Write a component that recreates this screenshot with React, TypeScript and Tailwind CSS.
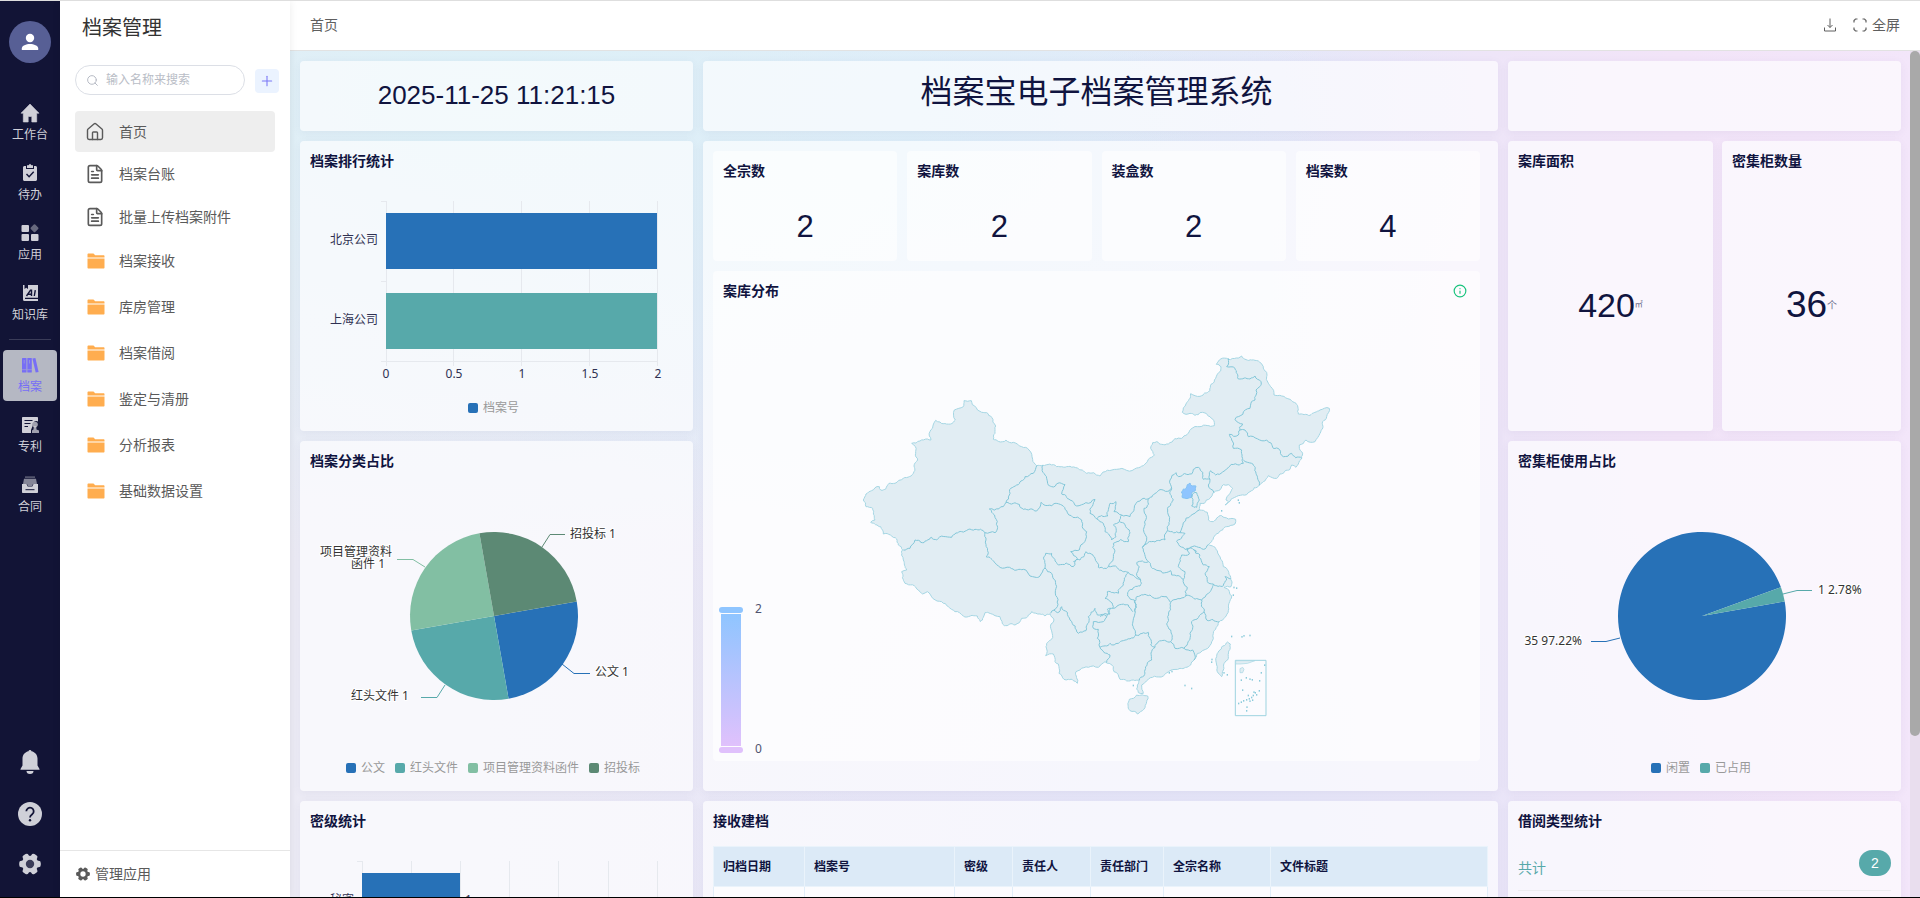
import React from "react";
import { FileText, House, Info, Plus, Search } from "lucide-react";

type Pt = [number, number];

const BLUE = "#2771b7";
const TEAL = "#57a9aa";
const MINT = "#82bfa3";
const MOSS = "#5c8974";

/* ---------- rail icons ---------- */

const HomeSolid = () => (
  <svg viewBox="0 0 20 20" className="size-5" fill="currentColor">
    <path d="M10 1 1 10.200h2.300V19h4.900v-5.500h3.600V19h4.900v-8.800H19z" stroke="currentColor" strokeWidth=".6" strokeLinejoin="round" />
  </svg>
);
const ClipboardSolid = () => (
  <svg viewBox="0 0 20 20" className="size-5" fill="currentColor">
    <path d="M3 4.500C3 3.700 3.700 3 4.500 3H6v3h8V3h1.500c.8 0 1.500.7 1.500 1.500v12c0 .8-.7 1.500-1.500 1.500h-11C3.700 18 3 17.300 3 16.500z" />
    <path d="M7 2.200h1.500L10 .8l1.500 1.400H13V5H7z" />
    <path d="m6.500 11 2.600 2.700 4.600-5" fill="none" stroke="#121436" strokeWidth="1.400" />
  </svg>
);
const AppsSolid = () => (
  <svg viewBox="0 0 20 20" className="size-5" fill="currentColor">
    <rect x="1.500" y="2" width="7.500" height="7" rx="1" />
    <rect x="1.500" y="11" width="7.500" height="7" rx="1" />
    <rect x="11" y="11" width="7.500" height="7" rx="1" />
    <rect x="11.400" y="2.200" width="6.200" height="6.200" rx="1" transform="rotate(45 14.500 5.300)" opacity=".45" />
  </svg>
);
const KnowledgeSolid = () => (
  <svg viewBox="0 0 20 20" className="size-5" fill="currentColor">
    <path d="M3 2h1.500v4l1.700-1.300L8 6V2h10v12.800H5v1.200h13v2H4.500A1.500 1.500 0 0 1 3 16.500z" />
    <path d="m6.500 13 4-5.800h1V13M8 11.200h3M15.300 7.200 14.300 13" fill="none" stroke="#121436" strokeWidth="1.400" />
  </svg>
);
const ArchiveBooks = () => (
  <svg viewBox="0 0 20 20" className="size-5" fill="currentColor">
    <rect x="2" y="3" width="4.500" height="14.500" rx=".5" />
    <rect x="7.300" y="3" width="4.500" height="14.500" rx=".5" />
    <path d="m12.400 3.600 3-.7 3.200 14-2.900.7z" />
    <path d="M4.200 5v3.500M9.500 5v3.500M2 14.700h4.500M7.300 14.700h4.500" stroke="#b4b7c6" strokeWidth=".5" />
  </svg>
);
const PatentSolid = () => (
  <svg viewBox="0 0 20 20" className="size-5" fill="currentColor">
    <path d="M2 3c0-.6.4-1 1-1h14c.6 0 1 .4 1 1v3.500a4 4 0 0 0-5.500 4.700L11 15v3H3c-.6 0-1-.4-1-1z" />
    <path d="M4.500 5.500h8M4.500 8.500h6M4.500 11.500h3.500" stroke="#121436" strokeWidth="1.200" />
    <circle cx="15" cy="9.600" r="2.800" opacity=".75" />
    <path d="M13.800 11h2.400l.3 3.500 2.500 1V18h-7v-2.500l1.500-1z" opacity=".75" />
  </svg>
);
const ContractSolid = () => (
  <svg viewBox="0 0 20 20" className="size-5" fill="currentColor">
    <path d="M5 1.500h10v1.200H5z" opacity=".5" />
    <path d="M4 3.700h12l1 5.300h-4l-1 2H8L7 9H3z" opacity=".6" />
    <path d="M2 9h4.500l1.200 2.500h4.600L13.500 9H18v8c0 .6-.4 1-1 1H3c-.6 0-1-.4-1-1z" />
    <path d="M5.500 14.700h9" stroke="#121436" strokeWidth="1" />
  </svg>
);
const BellSolid = () => (
  <svg viewBox="0 0 24 26" className="h-[26px] w-6" fill="currentColor">
    <path d="M12 1c.8 0 1.400.6 1.500 1.300C17 3 19.500 6 19.500 9.500v7L21.500 20v.8h-19V20l2-3.500v-7C4.500 6 7 3 10.500 2.300 10.600 1.600 11.200 1 12 1zM8.500 22h7a3.500 3 0 0 1-7 0z" />
  </svg>
);
const HelpSolid = () => (
  <svg viewBox="0 0 24 24" className="size-6">
    <circle cx="12" cy="12" r="12" fill="currentColor" />
    <path d="M8.300 9.300a3.700 3.700 0 1 1 5.900 3c-1.400 1-2.200 1.600-2.200 3.200" fill="none" stroke="#121436" strokeWidth="1.800" />
    <circle cx="12" cy="18.300" r="1.200" fill="#121436" />
  </svg>
);
const GearSolid = ({ className, hole }: { className: string; hole: string }) => (
  <svg viewBox="0 0 20 20" className={className} fill="currentColor">
    <circle cx="10" cy="10" r="7.600" />
    {[0, 60, 120, 180, 240, 300].map((a) => (
      <rect key={a} x="15" y="7" width="4.800" height="6" rx="2" transform={`rotate(${a} 10 10)`} />
    ))}
    <circle cx="10" cy="10" r="3.800" fill={hole} />
  </svg>
);
const FolderIcon = () => (
  <svg viewBox="0 0 18 16" className="h-4 w-[18px] shrink-0" fill="#ffad4f">
    <path d="M.5 1.500C.5.900.9.500 1.500.5h5l1.700 1.700h8.300c.6 0 1 .4 1 1v1.300H.5z" />
    <path d="M.5 5.500h17v9c0 .6-.4 1-1 1h-15c-.6 0-1-.4-1-1z" />
  </svg>
);

/* ---------- navigation ---------- */

const railTop = [
  { label: "工作台", icon: <HomeSolid /> },
  { label: "待办", icon: <ClipboardSolid /> },
  { label: "应用", icon: <AppsSolid /> },
  { label: "知识库", icon: <KnowledgeSolid /> },
];
const railBottom = [
  { label: "档案", icon: <ArchiveBooks />, active: true },
  { label: "专利", icon: <PatentSolid /> },
  { label: "合同", icon: <ContractSolid /> },
];

function RailItem({ label, icon, active }: { label: string; icon: React.ReactNode; active?: boolean }) {
  return (
    <a
      href="#"
      className={
        "flex h-[51px] w-[54px] flex-col items-center gap-1 rounded pt-[5px] text-xs leading-4 " +
        (active ? "bg-[#b5b8c3] text-[#776ef5]" : "text-[#d0d0d8]")
      }
    >
      {icon}
      <span>{label}</span>
    </a>
  );
}

function Rail() {
  return (
    <nav className="flex w-[60px] shrink-0 flex-col items-center bg-[#121436] pt-5 pb-[22px]">
      <button aria-label="用户" className="flex size-[42px] items-center justify-center rounded-full bg-[#575f95]">
        <svg viewBox="0 0 18 18" className="size-[18px]" fill="#fff">
          <circle cx="9" cy="5" r="4.200" />
          <path d="M.8 17v-1.500c0-3 4.400-4.500 8.200-4.500s8.200 1.500 8.200 4.500V17z" />
        </svg>
      </button>
      <div className="mt-[35px] flex flex-col items-center gap-[9px]">
        {railTop.map((i) => (
          <RailItem key={i.label} {...i} />
        ))}
        <div className="my-px h-px w-[42px] bg-[#3a3c58]" />
        {railBottom.map((i) => (
          <RailItem key={i.label} {...i} />
        ))}
      </div>
      <div className="mt-auto flex flex-col items-center gap-[27px] text-[#cfd0d8]">
        <button aria-label="通知"><BellSolid /></button>
        <button aria-label="帮助"><HelpSolid /></button>
        <button aria-label="设置"><GearSolid className="size-[22px]" hole="#3a3c58" /></button>
      </div>
    </nav>
  );
}

const folders = ["档案接收", "库房管理", "档案借阅", "鉴定与清册", "分析报表", "基础数据设置"];

function SidePanel() {
  return (
    <aside className="z-10 flex w-[230px] shrink-0 flex-col bg-white text-[#5a5a5a] shadow-[0_0_8px_rgba(0,0,0,0.08)]">
      <h1 className="mt-[11px] ml-[22px] text-xl leading-8 text-[#333]">档案管理</h1>
      <div className="mt-[21px] ml-[15px] flex items-center gap-[10px]">
        <label className="flex h-[30px] w-[170px] items-center gap-[7px] rounded-full border border-[#dcdfe6] pl-[10px]">
          <Search className="size-[13px] shrink-0 text-[#b4b8c2]" strokeWidth={1.8} />
          <input
            aria-label="搜索"
            placeholder="输入名称来搜索"
            className="w-full min-w-0 bg-transparent text-xs outline-none placeholder:text-[#b9bdc6]"
          />
        </label>
        <button aria-label="新增" className="mt-[2px] flex size-6 items-center justify-center rounded bg-[#ebf3ff] text-[#7b78f6]">
          <Plus className="size-4" strokeWidth={1.6} />
        </button>
      </div>
      <ul className="mx-[15px] mt-4 text-sm">
        <li>
          <a href="#" className="flex h-[41px] items-center gap-[14px] rounded bg-[#eee] pl-[10px]">
            <House className="size-5" strokeWidth={1.7} />
            <span>首页</span>
          </a>
        </li>
        {["档案台账", "批量上传档案附件"].map((t) => (
          <li key={t}>
            <a href="#" className="flex h-[43px] items-center gap-[14px] pl-[10px]">
              <FileText className="size-5" strokeWidth={2} />
              <span>{t}</span>
            </a>
          </li>
        ))}
        {folders.map((t) => (
          <li key={t}>
            <a href="#" className="flex h-[46px] items-center gap-[14px] pl-3">
              <FolderIcon />
              <span>{t}</span>
            </a>
          </li>
        ))}
      </ul>
      <button className="mt-auto flex h-[47px] items-center gap-[5px] border-t border-[#e6e6e6] pl-4 text-sm">
        <GearSolid className="size-[14px]" hole="#fff" />
        管理应用
      </button>
    </aside>
  );
}

/* ---------- cards ---------- */

function Card({ title, className = "", children }: { title?: string; className?: string; children?: React.ReactNode }) {
  return (
    <section className={"flex min-w-0 flex-col rounded bg-white/65 shadow-[0_2px_10px_rgba(60,60,120,0.06)] " + className}>
      {title && <h2 className="px-[10px] pt-[10px] text-sm leading-5 font-bold">{title}</h2>}
      {children}
    </section>
  );
}

function Stat({ title, value }: { title: string; value: number }) {
  return (
    <div className="flex h-[110px] flex-col rounded bg-white/60 px-[10px] pt-[10px]">
      <h2 className="text-sm leading-5 font-bold">{title}</h2>
      <div className="mt-7 text-center text-[31px] leading-9">{value}</div>
    </div>
  );
}

/* ---------- charts ---------- */

const label = "font-['Noto_Sans','Noto_Sans_CJK_SC',sans-serif] text-xs";

function Legend({ items }: { items: { x: number; y: number; text: string; color: string }[] }) {
  return (
    <g className={label}>
      {items.map((i) => (
        <g key={i.text}>
          <rect x={i.x} y={i.y - 5} width="10" height="10" rx="2" fill={i.color} />
          <text x={i.x + 15} y={i.y - 1} dominantBaseline="central" fill="#999">{i.text}</text>
        </g>
      ))}
    </g>
  );
}

function RankChart() {
  return (
    <svg viewBox="0 30 393 260" className="w-full">
      <g stroke="#e6e9ee">
        {[86.5, 153.5, 221.5, 289.5, 357.5].map((x) => (
          <line key={x} x1={x} x2={x} y1="60" y2="225" />
        ))}
        {[60.5, 140.5, 220.5].map((y) => (
          <line key={y} x1="81" x2="86" y1={y} y2={y} />
        ))}
        <line x1="86" x2="357" y1="220.5" y2="220.5" />
      </g>
      <rect x="86" y="72" width="271" height="56" fill={BLUE} />
      <rect x="86" y="152" width="271" height="56" fill={TEAL} />
      <g className={label} fill="#2f3152" dominantBaseline="central">
        <text x="78" y="98" textAnchor="end">北京公司</text>
        <text x="78" y="178" textAnchor="end">上海公司</text>
        {["0", "0.5", "1", "1.5", "2"].map((t, i) => (
          <text key={t} x={86 + i * 68} y="232" textAnchor="middle">{t}</text>
        ))}
      </g>
      <Legend items={[{ x: 168, y: 267, text: "档案号", color: BLUE }]} />
    </svg>
  );
}

function slice(cx: number, cy: number, r: number, from: number, to: number) {
  const p = (a: number) => `${cx + r * Math.cos((a * Math.PI) / 180)} ${cy + r * Math.sin((a * Math.PI) / 180)}`;
  return `M${cx} ${cy}L${p(from)}A${r} ${r} 0 ${to - from > 180 ? 1 : 0} 1 ${p(to)}Z`;
}

const halo = { stroke: "#fff", strokeWidth: 2, paintOrder: "stroke", fill: "#333" } as const;

function CategoryPie() {
  return (
    <svg viewBox="0 30 393 320" className="w-full">
      {[BLUE, TEAL, MINT, MOSS].map((c, i) => (
        <path key={c} d={slice(194, 175, 84, -10 + i * 90, 80 + i * 90)} fill={c} />
      ))}
      <g fill="none">
        <path d="M242 106 250 93.500H265" stroke={MOSS} />
        <path d="M262 223 274 232.500H290" stroke={BLUE} />
        <path d="M145 244 137 256.500H121" stroke={TEAL} />
        <path d="M125 126 113 118.500H97" stroke={MINT} />
      </g>
      <g className={label} dominantBaseline="central" {...halo}>
        <text x="270" y="92">招投标 1</text>
        <text x="295" y="230">公文 1</text>
        <text x="109" y="254" textAnchor="end">红头文件 1</text>
        <text textAnchor="end">
          <tspan x="92" y="110">项目管理资料</tspan>
          <tspan x="85" y="122">函件 1</tspan>
        </text>
      </g>
      <Legend
        items={[
          { x: 46, y: 327, text: "公文", color: BLUE },
          { x: 95, y: 327, text: "红头文件", color: TEAL },
          { x: 168, y: 327, text: "项目管理资料函件", color: MINT },
          { x: 289, y: 327, text: "招投标", color: MOSS },
        ]}
      />
    </svg>
  );
}

function UsagePie() {
  return (
    <svg viewBox="0 30 393 320" className="w-full">
      <path d={slice(194, 175, 84, -10, 340)} fill={BLUE} />
      <path d={slice(194, 175, 84, -20, -10)} fill={TEAL} />
      <g fill="none">
        <path d="M275 153 289 149.500H304" stroke={TEAL} />
        <path d="M112 197 98 200.500H83" stroke={BLUE} />
      </g>
      <g className={label} dominantBaseline="central" {...halo}>
        <text x="310" y="148">1 2.78%</text>
        <text x="74" y="199" textAnchor="end">35 97.22%</text>
      </g>
      <Legend
        items={[
          { x: 143, y: 327, text: "闲置", color: BLUE },
          { x: 192, y: 327, text: "已占用", color: TEAL },
        ]}
      />
    </svg>
  );
}

function SecrecyChart() {
  return (
    <svg viewBox="0 30 393 260" className="w-full">
      <g stroke="#e6e9ee">
        {[62.5, 111.5, 160.5, 209.5, 258.5, 308.5, 357.5].map((x) => (
          <line key={x} x1={x} x2={x} y1="60" y2="225" />
        ))}
        <line x1="57" x2="62" y1="60.5" y2="60.5" />
      </g>
      <rect x="62" y="72" width="98" height="56" fill={BLUE} />
      <g className={label} dominantBaseline="central" fill="#2f3152">
        <text x="54" y="98" textAnchor="end">秘密</text>
        <text x="165" y="98">1</text>
      </g>
    </svg>
  );
}

/* ---------- map ---------- */

/** Breaks each segment into small seeded wiggles so that borders read as natural coastlines. */
function wiggle(points: Pt[], amount = 0.16): string {
  const out: Pt[] = [points[0]];
  const split = (a: Pt, b: Pt, depth: number) => {
    const dx = b[0] - a[0];
    const dy = b[1] - a[1];
    const len = Math.hypot(dx, dy);
    if (depth === 0 || len < 8) {
      out.push(b);
      return;
    }
    const s = Math.sin((a[0] + b[0]) * 12.9898 + (a[1] + b[1]) * 78.233) * 43758.5453;
    const k = (s - Math.floor(s) - 0.5) * 2 * amount;
    const m: Pt = [(a[0] + b[0]) / 2 - dy * k, (a[1] + b[1]) / 2 + dx * k];
    split(a, m, depth - 1);
    split(m, b, depth - 1);
  };
  for (let i = 1; i < points.length; i++) split(points[i - 1], points[i], 3);
  return "M" + out.map((p) => `${p[0].toFixed(1)} ${p[1].toFixed(1)}`).join("L");
}

const east = (pts: Pt[]): Pt[] => pts.map(([x, y]) => [x + 780, y]);

const outline: Pt[] = [
  [70, 480], [78, 462], [95, 452], [118, 440], [122, 450], [138, 446], [147, 430], [165, 430], [190, 415], [222, 395],
  [222, 378], [233, 360], [227, 340], [226, 320], [215, 310], [240, 303], [262, 297], [273, 300], [268, 288], [287, 241],
  [300, 246], [340, 247], [346, 240], [343, 210], [370, 200], [372, 182], [394, 182], [397, 194], [420, 214], [440, 218],
  [455, 232], [467, 258], [465, 280], [460, 298], [475, 304], [520, 307], [545, 320], [567, 330], [578, 358], [590, 377],
  [608, 376], [650, 380], [690, 379], [712, 384], [740, 400],
  ...east([
    [0, 408], [50, 388], [110, 384], [130, 377], [145, 358], [163, 345], [152, 325], [158, 308], [170, 305], [185, 313],
    [205, 312], [225, 296], [245, 295], [262, 283], [272, 268], [300, 260], [343, 257], [343, 248], [330, 230], [315, 219],
    [300, 218], [285, 226], [270, 220], [258, 223], [247, 217], [258, 192], [272, 161], [300, 169], [330, 152], [333, 133],
    [347, 115], [362, 93], [363, 80], [349, 73], [358, 60], [380, 55], [425, 48], [455, 60], [475, 63], [490, 80],
    [500, 110], [512, 140], [522, 165], [545, 168], [570, 178], [588, 190], [595, 222], [630, 226], [660, 210], [688, 205],
    [680, 230], [668, 245], [660, 280], [645, 305], [618, 300], [598, 315], [605, 335], [605, 355], [595, 372], [588, 382],
    [575, 375], [570, 388], [540, 402], [530, 415], [505, 407], [490, 425], [478, 436], [450, 455], [440, 464], [415, 467],
    [375, 495], [385, 485], [378, 480], [390, 460], [398, 445], [385, 434], [370, 434], [355, 452], [340, 458], [330, 475],
    [313, 490], [300, 490], [298, 510], [322, 517], [325, 540], [340, 545], [365, 527], [385, 537], [407, 538], [405, 552],
    [380, 560], [355, 580], [335, 605], [325, 614], [352, 632], [362, 658], [370, 680], [392, 712], [393, 740], [372, 742],
    [388, 755], [395, 768], [387, 790], [385, 812], [357, 846], [340, 880], [340, 895], [312, 930], [282, 960], [272, 975],
    [240, 985], [210, 992], [190, 1008], [140, 1022], [125, 1035], [130, 1060], [115, 1058], [112, 1035], [118, 1020],
    [100, 1020], [60, 1018], [42, 995], [40, 980],
  ]),
  [802, 970], [795, 965], [775, 982], [745, 982], [720, 990], [708, 995], [712, 1030], [700, 1022], [685, 1018], [672, 1018],
  [657, 1000], [655, 972], [645, 965], [640, 942], [617, 947], [618, 920], [638, 893], [642, 840], [630, 822], [615, 828],
  [600, 822], [575, 815], [545, 835], [525, 855], [493, 857], [480, 830], [465, 827], [435, 818], [421, 845], [412, 828],
  [370, 828], [345, 815], [325, 800], [305, 785], [262, 755], [248, 762], [235, 750], [195, 730], [185, 695], [200, 690],
  [190, 660], [188, 630], [175, 615], [170, 597], [130, 582], [122, 560], [92, 547], [105, 540], [98, 505], [78, 500], [70, 480],
];

const borders: Pt[][] = [
  [[590, 377], [580, 400], [555, 410], [530, 435], [512, 445], [508, 465], [498, 487]],
  [[498, 487], [448, 507], [458, 520], [472, 545], [465, 578], [435, 578]],
  [[190, 630], [210, 625], [225, 600], [260, 602], [275, 592], [290, 600], [335, 592], [365, 575], [405, 568], [435, 578]],
  [[435, 578], [438, 600], [438, 650], [465, 668], [515, 686], [550, 688], [570, 708], [600, 708], [615, 684]],
  [[498, 487], [520, 490], [550, 508], [590, 513], [603, 487], [645, 490], [680, 512], [725, 540], [740, 575], [718, 630], [692, 635], [712, 655], [700, 680], [655, 675], [635, 640], [617, 640], [615, 684]],
  [[615, 684], [635, 700], [648, 745], [652, 800], [642, 810], [632, 820]],
  [[700, 665], [720, 660], [738, 635], [765, 655], [775, 682], [805, 680]],
  [[608, 376], [620, 415], [635, 440], [675, 434], [665, 462], [690, 480], [710, 498], [765, 478], [750, 520], [770, 537]],
  [[770, 537], [803, 528], [810, 490], [828, 485], [822, 515], [845, 525], [838, 545], [820, 555], [828, 590], [815, 600], [795, 575], [790, 550], [770, 537]],
  [[838, 545], [868, 570], [865, 605], [820, 610], [820, 655], [805, 680]],
  [[845, 525], [870, 530], [900, 483], [928, 475]],
  [[642, 810], [652, 818], [665, 800], [690, 840], [715, 880], [738, 872], [745, 830], [765, 805], [772, 825], [800, 830]],
  [[780, 922], [772, 895], [775, 868], [758, 860], [760, 845], [790, 845], [800, 830], [812, 805]],
  [[780, 922], [810, 945], [800, 968]],
  ...(
    [
      [[148, 475], [132, 505], [133, 560], [127, 622]],
      [[148, 475], [175, 452], [215, 445]],
      [[215, 445], [220, 480], [203, 510], [208, 540], [202, 572]],
      [[127, 622], [165, 606], [195, 600], [202, 572]],
      [[215, 445], [210, 420], [228, 398], [235, 410], [275, 402], [280, 388], [295, 382], [310, 418], [330, 418], [325, 435], [342, 458]],
      [[202, 572], [240, 578], [250, 548], [298, 510]],
      [[240, 578], [255, 580], [230, 605], [265, 628]],
      [[265, 628], [290, 620], [310, 628], [325, 614]],
      [[330, 418], [332, 392], [347, 405], [385, 383], [430, 370]],
      [[430, 360], [455, 370], [468, 400], [478, 436]],
      [[430, 370], [425, 330], [400, 325], [395, 300], [388, 283], [415, 285], [420, 270], [435, 270]],
      [[435, 270], [445, 290], [500, 300], [520, 325], [538, 328], [550, 350], [575, 340], [605, 355]],
      [[420, 270], [418, 262], [428, 252], [405, 238], [450, 205], [465, 180], [468, 150], [483, 125], [465, 108], [450, 117], [415, 117], [405, 85], [380, 80], [385, 55]],
      [[275, 472], [280, 460], [290, 458], [298, 480], [290, 502], [275, 498], [275, 472]],
      [[127, 622], [145, 665], [165, 688], [212, 692], [215, 705], [250, 718], [255, 695]],
      [[255, 695], [235, 680], [245, 645], [268, 642], [260, 625], [290, 635]],
      [[145, 665], [110, 668], [118, 680], [110, 700], [122, 720], [120, 738], [88, 750]],
      [[25, 680], [52, 683], [85, 697], [122, 720]],
      [[85, 697], [70, 735], [55, 760], [22, 755], [15, 775], [38, 805], [22, 808], [30, 822], [0, 830]],
      [[280, 628], [300, 645], [310, 675], [328, 680], [315, 700], [322, 725], [340, 732]],
      [[340, 732], [370, 737], [380, 720], [375, 710], [392, 716]],
      [[340, 732], [325, 760], [305, 780]],
      [[250, 718], [257, 768], [275, 770], [305, 780]],
      [[257, 768], [212, 787]],
      [[103, 785], [110, 770], [150, 765], [170, 775], [200, 770], [212, 787]],
      [[88, 750], [83, 768], [103, 780], [103, 815]],
      [[103, 785], [105, 820], [98, 850], [107, 885]],
      [[212, 787], [203, 830], [212, 870], [212, 905]],
      [[38, 805], [65, 793], [85, 795], [98, 815]],
      [[305, 780], [312, 815], [320, 840], [357, 846]],
      [[312, 815], [275, 845], [270, 880], [252, 925]],
      [[212, 905], [225, 925], [252, 925], [278, 930], [282, 960]],
      [[165, 922], [175, 905], [212, 905]],
      [[107, 885], [145, 877], [152, 915], [165, 922]],
      [[165, 922], [155, 960], [135, 990], [118, 1020]],
      [[107, 885], [70, 902], [55, 910], [30, 910], [0, 922]],
    ] as Pt[][]
  ).map(east),
];

const beijing = east([[244, 456], [250, 447], [258, 446], [262, 434], [270, 429], [276, 438], [288, 438], [286, 452], [276, 456], [275, 472], [247, 473], [244, 456]]);
const hainan = east([[88, 1078], [110, 1065], [143, 1068], [140, 1085], [112, 1122], [90, 1112], [88, 1078]]);
const taiwan = east([[383, 906], [391, 912], [385, 955], [370, 990], [365, 1010], [350, 975], [350, 950], [368, 918], [383, 906]]);

const islets: Pt[] = east([
  [395, 889], [426, 890], [432, 887], [450, 886], [336, 958], [335, 966], [372, 998], [382, 1004], [255, 1036], [275, 1045],
  [100, 1036], [402, 742], [410, 744], [400, 765], [415, 480], [418, 488], [365, 512], [208, 998], [216, 994],
  [424, 1020], [439, 1013], [450, 1017], [457, 1019], [479, 1022], [484, 998], [428, 1050], [478, 1052], [466, 1058],
  [460, 1066], [455, 1072], [448, 1076], [458, 1080], [450, 1083], [440, 1079], [431, 1082], [424, 1086], [416, 1090],
  [441, 1101], [440, 1112], [462, 1056], [445, 1066], [470, 1064], [494, 975],
]);

function ChinaMap() {
  return (
    <svg viewBox="0 30 767 460" className="w-full">
      <defs>
        <linearGradient id="range" x1="0" x2="0" y1="0" y2="1">
          <stop offset="0" stopColor="#8fc5ff" />
          <stop offset="1" stopColor="#e0c1fc" />
        </linearGradient>
      </defs>
      <g transform="translate(127 69) scale(.33333)" fill="#e1edf3" stroke="#a5d6e3" strokeWidth="3" strokeLinejoin="round">
        <path d={wiggle(outline)} />
        <path d={wiggle(hainan)} />
        <path d={wiggle(taiwan)} />
        <path d={wiggle(beijing)} fill="#8fc5ff" stroke="#84c2f2" />
        <g fill="none" stroke="#82c6d8">
          {borders.map((b, i) => (
            <path key={i} d={wiggle(b, 0.2)} />
          ))}
        </g>
        <rect x="1186" y="961" width="92" height="166" fill="none" stroke="#9ed3e0" />
        <path d="M1187 962h58l-22 8-22 2h-14zM1200 986l8-4 4 6-4 10-8 0z" strokeWidth="2" />
        <g fill="#8ccbdb" stroke="none">
          {islets.map(([x, y]) => (
            <rect key={`${x}-${y}`} x={x - 2} y={y - 2} width="4" height="5" />
          ))}
        </g>
      </g>
      <rect x="8" y="343" width="20" height="132" fill="url(#range)" />
      <rect x="6" y="336" width="24" height="6" rx="3" fill="#8fc5ff" />
      <rect x="6" y="476" width="24" height="6" rx="3" fill="#e0c1fc" />
      <g className={label} fill="#50536f" dominantBaseline="central">
        <text x="42" y="337">2</text>
        <text x="42" y="477">0</text>
      </g>
    </svg>
  );
}

/* ---------- table ---------- */

const columns = [
  { t: "归档日期", w: "w-[91px]" },
  { t: "档案号", w: "w-[150px]" },
  { t: "密级", w: "w-[58px]" },
  { t: "责任人", w: "w-[78px]" },
  { t: "责任部门", w: "w-[73px]" },
  { t: "全宗名称", w: "w-[107px]" },
  { t: "文件标题", w: "" },
];

function IntakeTable() {
  return (
    <div className="px-[10px] pt-[15px]">
      <table className="w-full table-fixed border-collapse text-left text-xs">
        <thead>
          <tr className="h-10 bg-[#dceaf7]">
            {columns.map((c) => (
              <th key={c.t} className={"border border-[#eaf3fb] px-[9px] font-bold whitespace-nowrap " + c.w}>{c.t}</th>
            ))}
          </tr>
        </thead>
        <tbody>
          <tr className="h-10 bg-white/60">
            {columns.map((c) => (
              <td key={c.t} className="border border-[#e1edf8]" />
            ))}
          </tr>
        </tbody>
      </table>
    </div>
  );
}

/* ---------- page ---------- */

export default function App() {
  return (
    <div className="flex h-screen overflow-hidden border-t border-b border-t-[#dedede] border-b-black bg-white font-['Liberation_Sans','Noto_Sans_CJK_SC',sans-serif] text-[#10143f]">
      <Rail />
      <SidePanel />
      <div className="flex min-w-0 flex-1 flex-col">
        <header className="flex h-[50px] shrink-0 items-center border-b border-[#e2e2e2] px-5 pb-[2px] text-sm text-[#5f5f5f]">
          <span>首页</span>
          <div className="ml-auto flex items-center gap-4">
            <button aria-label="下载">
              <svg viewBox="0 0 14 14" className="size-[14px]" fill="none" stroke="currentColor">
                <path d="M7 .5v9M4.500 7 7 9.500 9.500 7M1.500 9.500v3.500h11V9.500" />
              </svg>
            </button>
            <button className="flex items-center gap-[5px]">
              <svg viewBox="0 0 14 14" className="size-[14px]" fill="none" stroke="currentColor" strokeWidth="1.200">
                <path d="M1 4.500V2.500L2.500 1h2M9.500 1h2L13 2.500v2M13 9.500v2L11.500 13h-2M4.500 13h-2L1 11.500v-2" />
              </svg>
              全屏
            </button>
          </div>
        </header>
        <div className="flex min-h-0 flex-1 bg-[radial-gradient(ellipse_at_12%_5%,#dcf0f7_0%,transparent_42%),radial-gradient(ellipse_at_38%_10%,#deebfa_0%,transparent_40%),radial-gradient(ellipse_at_55%_95%,#e5e5f8_0%,transparent_50%),linear-gradient(90deg,#ecebf5_0%,#e9e6f8_60%,#f2e4f8_85%,#f3e6fa_100%)]">
          <main className="grid min-w-0 flex-1 grid-cols-[393fr_795fr_393fr] grid-rows-[70px_290px_350px_350px] gap-[10px] overflow-hidden pt-[10px] pr-[9px] pl-[10px]">
            <Card className="items-center pt-4">
              <time className="text-[26px] leading-9 whitespace-nowrap">2025-11-25 11:21:15</time>
            </Card>
            <Card className="items-center pr-2">
              <h1 className="mt-[7px] text-[32px] leading-[48px]">档案宝电子档案管理系统</h1>
            </Card>
            <Card />

            <Card title="档案排行统计">
              <RankChart />
            </Card>
            <Card className="row-span-2 pt-[10px] pr-[18px] pl-[10px]">
              <div className="grid grid-cols-4 gap-[10px]">
                <Stat title="全宗数" value={2} />
                <Stat title="案库数" value={2} />
                <Stat title="装盒数" value={2} />
                <Stat title="档案数" value={4} />
              </div>
              <div className="mt-[10px] rounded bg-white/60 pt-[10px]">
                <div className="flex items-center justify-between pr-[13px] pl-[10px]">
                  <h2 className="text-sm leading-5 font-bold">案库分布</h2>
                  <button aria-label="说明" className="text-[#19c37d]">
                    <Info className="size-[14px]" strokeWidth={2} />
                  </button>
                </div>
                <ChinaMap />
              </div>
            </Card>
            <div className="grid min-w-0 grid-cols-[205fr_179fr] gap-[9px]">
              <Card title="案库面积">
                <div className="flex flex-1 items-center justify-center text-[34px]">
                  <span className="mt-2">420</span>
                  <span className="mt-2 text-[8px] text-[#6b6d8c]">㎡</span>
                </div>
              </Card>
              <Card title="密集柜数量">
                <div className="flex flex-1 items-center justify-center text-[37px]">
                  <span className="mt-2">36</span>
                  <span className="mt-2 text-[10px] text-[#6b6d8c]">个</span>
                </div>
              </Card>
            </div>

            <Card title="档案分类占比">
              <CategoryPie />
            </Card>
            <Card title="密集柜使用占比">
              <UsagePie />
            </Card>

            <Card title="密级统计">
              <SecrecyChart />
            </Card>
            <Card title="接收建档">
              <IntakeTable />
            </Card>
            <Card title="借阅类型统计">
              <div className="mx-[10px] mt-[17px] flex h-[43px] items-start justify-between border-b border-[#ececf0] text-sm text-[#57a9aa]">
                <span className="mt-[10px] leading-5">共计</span>
                <span className="mt-[2px] flex h-[26px] w-8 items-center justify-center rounded-full bg-[#57a9aa] text-white">2</span>
              </div>
            </Card>
          </main>
          <div className="w-[10px] shrink-0 bg-[#e9deee]">
            <div className="h-[81%] rounded-full bg-[#a9a9a9]" />
          </div>
        </div>
      </div>
    </div>
  );
}
